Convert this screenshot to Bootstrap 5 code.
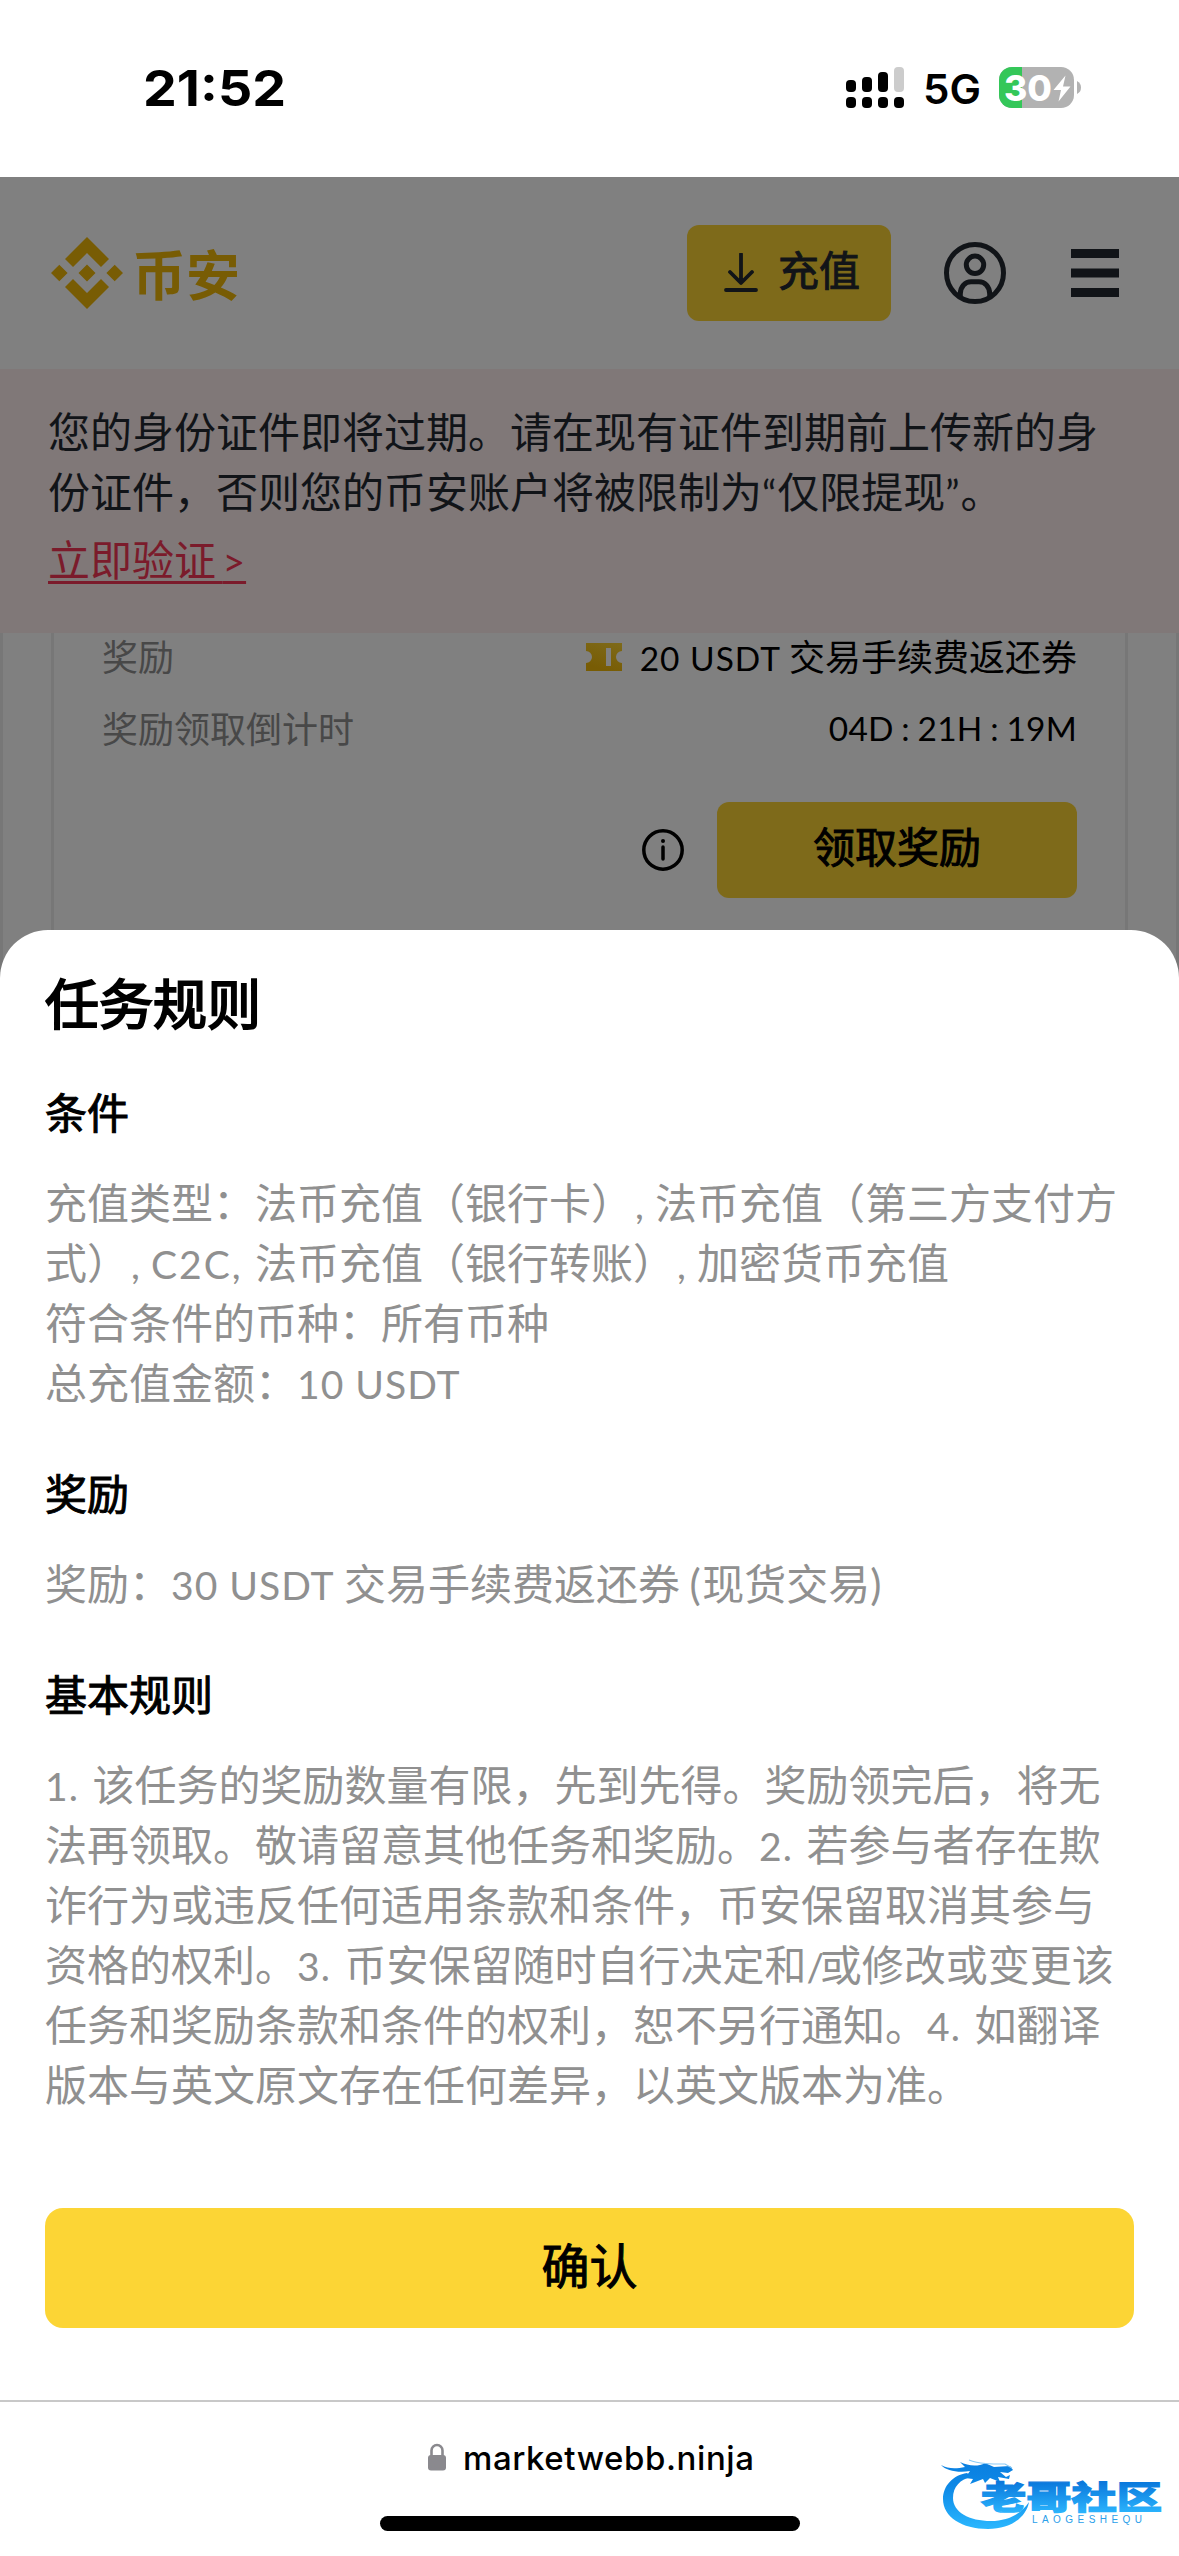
<!DOCTYPE html>
<html lang="zh-CN">
<head>
<meta charset="utf-8">
<meta name="viewport" content="width=device-width, initial-scale=1">
<title>任务规则</title>
<link href="https://cdn.jsdelivr.net/npm/bootstrap@5.3.0/dist/css/bootstrap.min.css" rel="stylesheet">
<style>
  body { width: 1179px; height: 2556px; overflow: hidden; background: #fff; color: #000;
    font-family: "Noto Sans CJK SC", sans-serif; font-size: 42px; line-height: 60px; text-spacing-trim: space-all; }
  svg { display: block; flex: none; }
  svg text { font-family: Inter, sans-serif; }
  .statusbar { height: 177px; }
  .dim-nav { height: 192px; background: #808080; padding: 0 60px 0 51px; color: #111418; }
  .brand-text { font-size: 54px; font-weight: 700; color: #785c04; margin-left: 9px; padding-bottom: 1px; }
  .btn-dim { background: #7e6a1a; border: 0; border-radius: 12px; height: 96px; }
  .btn-deposit { width: 204px; font-size: 41px; color: #111418; padding: 0 0 0 37px; margin-right: 53px; }
  .btn-deposit span { margin-left: 20px; padding-bottom: 9px; }
  .btn-claim { width: 360px; font-size: 42px; color: #000; padding: 0 0 11px; margin-left: 33px; }
  .menu-icon { margin-left: 65px; }
  .strong-text { font-weight: 400; -webkit-text-stroke: 1px currentColor; }
  .notice { height: 264px; background: #807878; color: #111418; padding: 31px 48px 0; white-space: nowrap; }
  .notice a { color: #7b1b2b; line-height: 60px; margin-top: 8px; text-decoration-thickness: 3px; text-underline-offset: 5px; word-spacing: -3px; }
  .task-area { height: 345px; background: #808080; border: solid #777; border-width: 0 3px; padding: 0 48px; overflow: hidden; }
  .task-card { height: 345px; border: solid #777; border-width: 0 3px; padding: 0 48px; font-size: 36px; line-height: 44px; display: flow-root; }
  .task-card .task-line { height: 44px; white-space: nowrap; margin-bottom: 28px; }
  .claim-row { margin-top: 53px; }
  .label-dim { color: #484848; }
  .ticket-icon { margin-top: 3px; }
  .reward-name { margin-left: 18px; }
  .lt { font-family: Lato, sans-serif; font-size: .93em; line-height: 0; letter-spacing: 1px; }
  .paren { font-size: 1em; letter-spacing: 1.5px; }
  .countdown { line-height: 46px; letter-spacing: .2px; word-spacing: -1.1px; }
  .sheet { height: 1470px; background: #fff; border-radius: 48px 48px 0 0; margin-top: -48px; padding: 36px 45px 0; position: relative; }
  .sheet h1 { font-size: 54px; line-height: 72px; margin: 0; -webkit-text-stroke-width: 2px; }
  .sheet h2 { font-size: 42px; line-height: 60px; margin: 51px 0 30px; }
  .sheet h1 + h2 { margin-top: 43px; }
  .sheet p { color: #909090; margin: 0; white-space: nowrap; }
  .numb { display: inline-block; width: 47.5px; }
  .comma { display: inline-block; width: 22px; padding-left: 2px; }
  .ctwoc { display: inline-block; width: 104px; letter-spacing: 2px; }
  .slash { letter-spacing: -4.5px; }
  .btn-confirm { height: 120px; background: #fcd535; border: 0; border-radius: 18px; font-size: 48px; color: #000; margin-top: 95px; padding: 0 0 11px; }
  .browserbar { height: 156px; border-top: 2px solid #c8c8c8; background: #fff; }
</style>
</head>
<body>
<header class="statusbar">
  <svg width="1179" height="177" viewBox="0 0 1179 177">
    <text x="143" y="106" font-size="50" font-weight="700" textLength="143" lengthAdjust="spacingAndGlyphs">21:52</text>
    <g>
      <rect x="846" y="80" width="10" height="12" rx="4"/><rect x="862" y="77" width="10" height="15" rx="4"/>
      <rect x="878" y="72" width="10" height="20" rx="4"/><rect x="894" y="67" width="10" height="25" rx="4" fill="#ccc"/>
      <rect x="846" y="97" width="10" height="11" rx="4"/><rect x="862" y="97" width="10" height="11" rx="4"/>
      <rect x="878" y="97" width="10" height="11" rx="4"/><rect x="894" y="97" width="10" height="11" rx="4"/>
    </g>
    <text x="923" y="104" font-size="41" font-weight="600" textLength="58" lengthAdjust="spacingAndGlyphs">5G</text>
    <clipPath id="cell"><rect x="999" y="67" width="75" height="41" rx="13"/></clipPath>
    <g clip-path="url(#cell)"><rect x="999" y="67" width="75" height="41" fill="#b2b2b2"/><rect x="999" y="67" width="23" height="41" fill="#34c759"/></g>
    <path d="M1077 81q4 2 4 6.500t-4 6.500z" fill="#b2b2b2"/>
    <text x="1004" y="100.500" font-size="35" font-weight="800" fill="#fff" textLength="48" lengthAdjust="spacingAndGlyphs">30</text>
    <path d="M1065.500 75.500 1053.500 90H1061L1058.500 101.500 1070.500 86.500H1063z" fill="#fff"/>
  </svg>
</header>

<nav class="dim-nav d-flex align-items-center">
  <svg width="72" height="72" viewBox="0 0 72 72" fill="#785c04">
    <path d="M36 0 58 22 50 30 36 16 22 30 14 22zM36 72 58 50 50 42 36 56 22 42 14 50zM36 27.500 44.500 36 36 44.500 27.500 36zM8.300 27.700 16.600 36 8.300 44.300 0 36zM63.700 27.700 72 36 63.700 44.300 55.400 36z"/>
  </svg>
  <span class="brand-text me-auto">币安</span>
  <button class="btn btn-dim btn-deposit d-flex align-items-center">
    <svg width="34" height="40" viewBox="0 0 34 40" fill="none" stroke="#111418" stroke-width="3.800" stroke-linecap="round" stroke-linejoin="round"><path d="M17 1V29.500M6 19 17 30 28 19M2 37H32"/></svg>
    <span class="strong-text">充值</span>
  </button>
  <svg width="62" height="62" viewBox="0 0 62 62" fill="none" stroke="#111418" stroke-width="5">
    <circle cx="31" cy="31" r="28.500"/><circle cx="31" cy="22.800" r="8.700"/><path d="M16.300 54V52C16.300 44 21.500 39.800 27 39.800H35C40.500 39.800 45.700 44 45.700 52V54"/>
  </svg>
  <svg class="menu-icon" width="48" height="48" viewBox="0 0 48 48" fill="#111418"><path d="M0 0H48V9H0zM0 19.500H48V28.500H0zM0 39H48V48H0z"/></svg>
</nav>

<section class="notice">
  <div>您的身份证件即将过期。请在现有证件到期前上传新的身<br>份证件，否则您的币安账户将被限制为<span class="lt">“</span>仅限提现<span class="lt">”</span>。</div>
  <a href="#" class="d-inline-block">立即验证 <span class="lt">&gt;</span></a>
</section>

<main class="task-area">
  <div class="task-card">
    <div class="task-lines">
      <div class="task-line d-flex justify-content-between"><span class="label-dim">奖励</span>
        <span class="d-flex align-items-center">
          <svg class="ticket-icon" width="36" height="28" viewBox="0 0 36 28"><defs><linearGradient id="tk" x1="1" y1="0" x2=".6" y2="1"><stop offset="0" stop-color="#7e6a1a"/><stop offset="1" stop-color="#785c04"/></linearGradient></defs>
          <path d="M0 0H36V8A6 6 0 0 0 36 20V28H0V20A6 6 0 0 0 0 8zM20 5V23H25V5z" fill="url(#tk)" fill-rule="evenodd"/></svg>
          <span class="reward-name"><span class="lt">20 USDT</span> 交易手续费返还券</span></span>
      </div>
      <div class="task-line d-flex justify-content-between mb-0"><span class="label-dim">奖励领取倒计时</span><span class="lt countdown">04D : 21H : 19M</span></div>
    </div>
    <div class="claim-row d-flex justify-content-end align-items-center">
      <svg width="42" height="42" viewBox="0 0 42 42" fill="none" stroke="#000" stroke-width="3.500"><circle cx="21" cy="21" r="19.200"/><path d="M21 18V30" stroke-linecap="round"/><circle cx="21" cy="12" r="2" fill="#000" stroke="none"/></svg>
      <button class="btn btn-dim btn-claim strong-text">领取奖励</button>
    </div>
  </div>
</main>

<section class="sheet">
  <h1 class="strong-text">任务规则</h1>
  <h2 class="strong-text">条件</h2>
  <p>充值类型：法币充值（银行卡）<span class="lt comma">,</span>法币充值（第三方支付方<br>式）<span class="lt comma">,</span><span class="lt ctwoc">C2C,</span>法币充值（银行转账）<span class="lt comma">,</span>加密货币充值<br>符合条件的币种：所有币种<br>总充值金额：<span class="lt">10 USDT</span></p>
  <h2 class="strong-text">奖励</h2>
  <p>奖励：<span class="lt">30 USDT</span> 交易手续费返还券 <span class="lt paren">(</span>现货交易<span class="lt paren">)</span></p>
  <h2 class="strong-text">基本规则</h2>
  <p><span class="lt numb">1.</span>该任务的奖励数量有限，先到先得。奖励领完后，将无<br>法再领取。敬请留意其他任务和奖励。<span class="lt numb">2.</span>若参与者存在欺<br>诈行为或违反任何适用条款和条件，币安保留取消其参与<br>资格的权利。<span class="lt numb">3.</span>币安保留随时自行决定和<span class="lt slash">/</span>或修改或变更该<br>任务和奖励条款和条件的权利，恕不另行通知。<span class="lt numb">4.</span>如翻译<br>版本与英文原文存在任何差异，以英文版本为准。</p>
  <button class="btn btn-confirm w-100 strong-text">确认</button>
</section>

<footer class="browserbar">
  <svg width="1179" height="154" viewBox="0 2402 1179 154">
    <defs><linearGradient id="wm" x1="0" y1="2462" x2="0" y2="2530" gradientUnits="userSpaceOnUse"><stop offset="0" stop-color="#0a7fe0"/><stop offset=".35" stop-color="#0d88e6"/><stop offset="1" stop-color="#2bb8ff"/></linearGradient>
    <linearGradient id="wt" x1="0" y1="2482" x2="0" y2="2513" gradientUnits="userSpaceOnUse"><stop offset="0" stop-color="#0a78dc"/><stop offset="1" stop-color="#2bb4fd"/></linearGradient></defs>
    <rect x="428" y="2455" width="18" height="15.500" rx="3" fill="#8a898e"/><path d="M431.500 2456V2450.500a5.500 5.500 0 0 1 11 0V2456" fill="none" stroke="#8a898e" stroke-width="2.600"/>
    <text x="463" y="2469.500" font-size="33" font-weight="500" textLength="291">marketwebb.ninja</text>
    <rect x="380" y="2516" width="420" height="15" rx="7.500"/>
    <g fill="url(#wm)">
      <path d="M967 2473C953 2475 943 2486 943 2499C943 2517 962 2529 988 2529C1010 2529 1026 2518 1029 2502C1021 2514 1008 2521 991 2521C969 2521 953 2512 953 2498C953 2487 960 2479 972 2477z"/>
      <path d="M941 2465C948 2469 956 2469 965 2467L960 2462C968 2466 978 2467 985 2463L994 2467 1010 2466 1013 2470 1008 2473 1000 2472 1006 2477 1010 2475 1009 2479 998 2477 1000 2482 990 2478 985 2483 983 2479 970 2484 973 2479 965 2478 970 2471C959 2473 946 2471 941 2465z"/>
      <path d="M969 2460C979 2464 991 2464 1005 2464L1012 2468" fill="none" stroke="#8ccbf5" stroke-width="1.200"/>
    </g>
    <text x="981" y="2509" font-size="32" font-weight="900" fill="url(#wt)" stroke="url(#wt)" stroke-width="1.200" textLength="181" lengthAdjust="spacingAndGlyphs" style="font-family:'Noto Sans CJK SC',sans-serif">老哥社区</text>
    <text x="1032" y="2522.500" font-size="10" font-weight="500" fill="#2aa0ea" textLength="110" style="font-family:'Liberation Sans',sans-serif">LAOGESHEQU</text>
  </svg>
</footer>
<script src="https://cdn.jsdelivr.net/npm/bootstrap@5.3.0/dist/js/bootstrap.bundle.min.js"></script>
</body>
</html>
